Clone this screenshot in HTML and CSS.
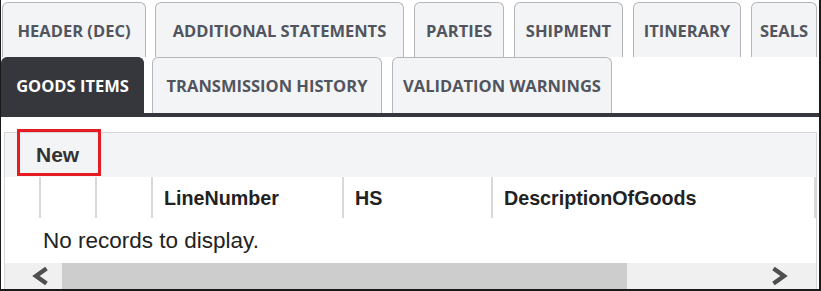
FILE: index.html
```html
<!DOCTYPE html>
<html>
<head>
<meta charset="utf-8">
<link rel="stylesheet" href="styles.css">
</head>
<body>
<div class="frame">
  <div class="tabrow tabrow-top">
    <div class="tab t-header">HEADER (DEC)</div>
    <div class="tab t-add">ADDITIONAL STATEMENTS</div>
    <div class="tab t-parties">PARTIES</div>
    <div class="tab t-ship">SHIPMENT</div>
    <div class="tab t-itin">ITINERARY</div>
    <div class="tab t-seals">SEALS</div>
  </div>
  <div class="tabrow tabrow-bottom">
    <div class="tab tab-active t-goods">GOODS ITEMS</div>
    <div class="tab t-trans">TRANSMISSION HISTORY</div>
    <div class="tab t-valid">VALIDATION WARNINGS</div>
  </div>
  <div class="darkbar"></div>
  <div class="grid">
    <div class="toolbar">
      <span class="new-btn">New</span>
    </div>
    <div class="highlight"></div>
    <div class="header-row">
      <div class="hcell c1"></div>
      <div class="hcell c2"></div>
      <div class="hcell c3"></div>
      <div class="hcell c4">LineNumber</div>
      <div class="hcell c5">HS</div>
      <div class="hcell c6">DescriptionOfGoods</div>
    </div>
    <div class="norecords">No records to display.</div>
    <div class="scrollbar">
      <div class="sb-btn sb-left">
        <svg width="17" height="18" viewBox="0 0 17 18"><polyline points="14.5,1.5 4,9 14.5,16.5" fill="none" stroke="#4f4f4f" stroke-width="4.4"/></svg>
      </div>
      <div class="sb-track">
        <div class="sb-thumb"></div>
      </div>
      <div class="sb-btn sb-right">
        <svg width="17" height="18" viewBox="0 0 17 18"><polyline points="2.5,1.5 13,9 2.5,16.5" fill="none" stroke="#4f4f4f" stroke-width="4.4"/></svg>
      </div>
    </div>
  </div>
</div>
</body>
</html>
```

FILE: styles.css
```css
html, body {
  margin: 0;
  padding: 0;
  background: #fff;
}

.frame {
  width: 821px;
  height: 291px;
  box-sizing: border-box;
  border-left: 1px solid #1a1a1a;
  border-right: 2px solid #1a1a1a;
  border-bottom: 2px solid #1a1a1a;
  background: #fff;
  overflow: hidden;
}

.tabrow {
  display: flex;
}

.tabrow-top {
  margin-top: 2px;
  padding-left: 1px;
  gap: 10px;
  height: 55px;
}

.tabrow-bottom {
  height: 56px;
  gap: 8px;
}

.tab {
  box-sizing: border-box;
  display: flex;
  align-items: center;
  justify-content: center;
  background: #f3f4f6;
  border: 1px solid #b5b6ba;
  border-bottom: none;
  border-radius: 6px 6px 0 0;
  font-family: "Open Sans", "DejaVu Sans", sans-serif;
  font-weight: 700;
  font-size: 16.5px;
  color: #52555e;
  white-space: nowrap;
  flex: none;
}

.t-header { width: 144px; margin-right: -1px; }
.t-add { width: 249px; }
.t-parties { width: 90px; }
.t-ship { width: 109px; }
.t-itin { width: 108px; }
.t-seals { width: 66px; }

.t-goods { width: 143px; }
.t-trans { width: 230px; margin-right: 2px; }
.t-valid { width: 220px; }

.tab-active {
  background: #36373c;
  border-color: #36373c;
  color: #fff;
}

.darkbar {
  height: 4px;
  background: #36373c;
}

.grid {
  position: relative;
  margin: 15px 2px 0 3px;
  border: 1px solid #d6d6d8;
  border-bottom: none;
  height: 157px;
  box-sizing: border-box;
  display: flex;
  flex-direction: column;
}

.toolbar {
  height: 44px;
  background: #f3f4f6;
  display: flex;
  align-items: center;
  padding-left: 31px;
}

.new-btn {
  font-family: "Liberation Sans", Arial, sans-serif;
  font-weight: 700;
  font-size: 21px;
  color: #333;
}

.highlight {
  position: absolute;
  left: 12px;
  top: -4px;
  width: 84px;
  height: 47px;
  box-sizing: border-box;
  border: 3px solid #e51c24;
}

.header-row {
  height: 41px;
  display: flex;
  background: #fff;
}

.hcell {
  box-sizing: border-box;
  border-left: 2px solid #d9d9db;
  font-family: "Liberation Sans", Arial, sans-serif;
  font-weight: 700;
  font-size: 19.7px;
  color: #222;
  display: flex;
  align-items: center;
  padding-left: 11px;
  padding-top: 2px;
}

.c1 { width: 34px; border-left: none; }
.c2 { width: 56px; }
.c3 { width: 56px; }
.c4 { width: 191px; }
.c5 { width: 149px; }
.c6 { width: 325px; border-right: 2px solid #d9d9db; }

.norecords {
  height: 45px;
  display: flex;
  align-items: center;
  padding-left: 38px;
  font-family: "Liberation Sans", Arial, sans-serif;
  font-size: 22.5px;
  color: #222;
}

.scrollbar {
  height: 26px;
  display: flex;
  background: #f0f0f0;
}

.sb-btn {
  display: flex;
  align-items: center;
  flex: none;
}

.sb-left {
  width: 57px;
  padding-left: 27px;
  box-sizing: border-box;
}

.sb-track {
  flex: 1;
  display: flex;
}

.sb-thumb {
  width: 565px;
  background: #cdcdcd;
}

.sb-right {
  width: 50px;
  padding-left: 5px;
  box-sizing: border-box;
}
```
